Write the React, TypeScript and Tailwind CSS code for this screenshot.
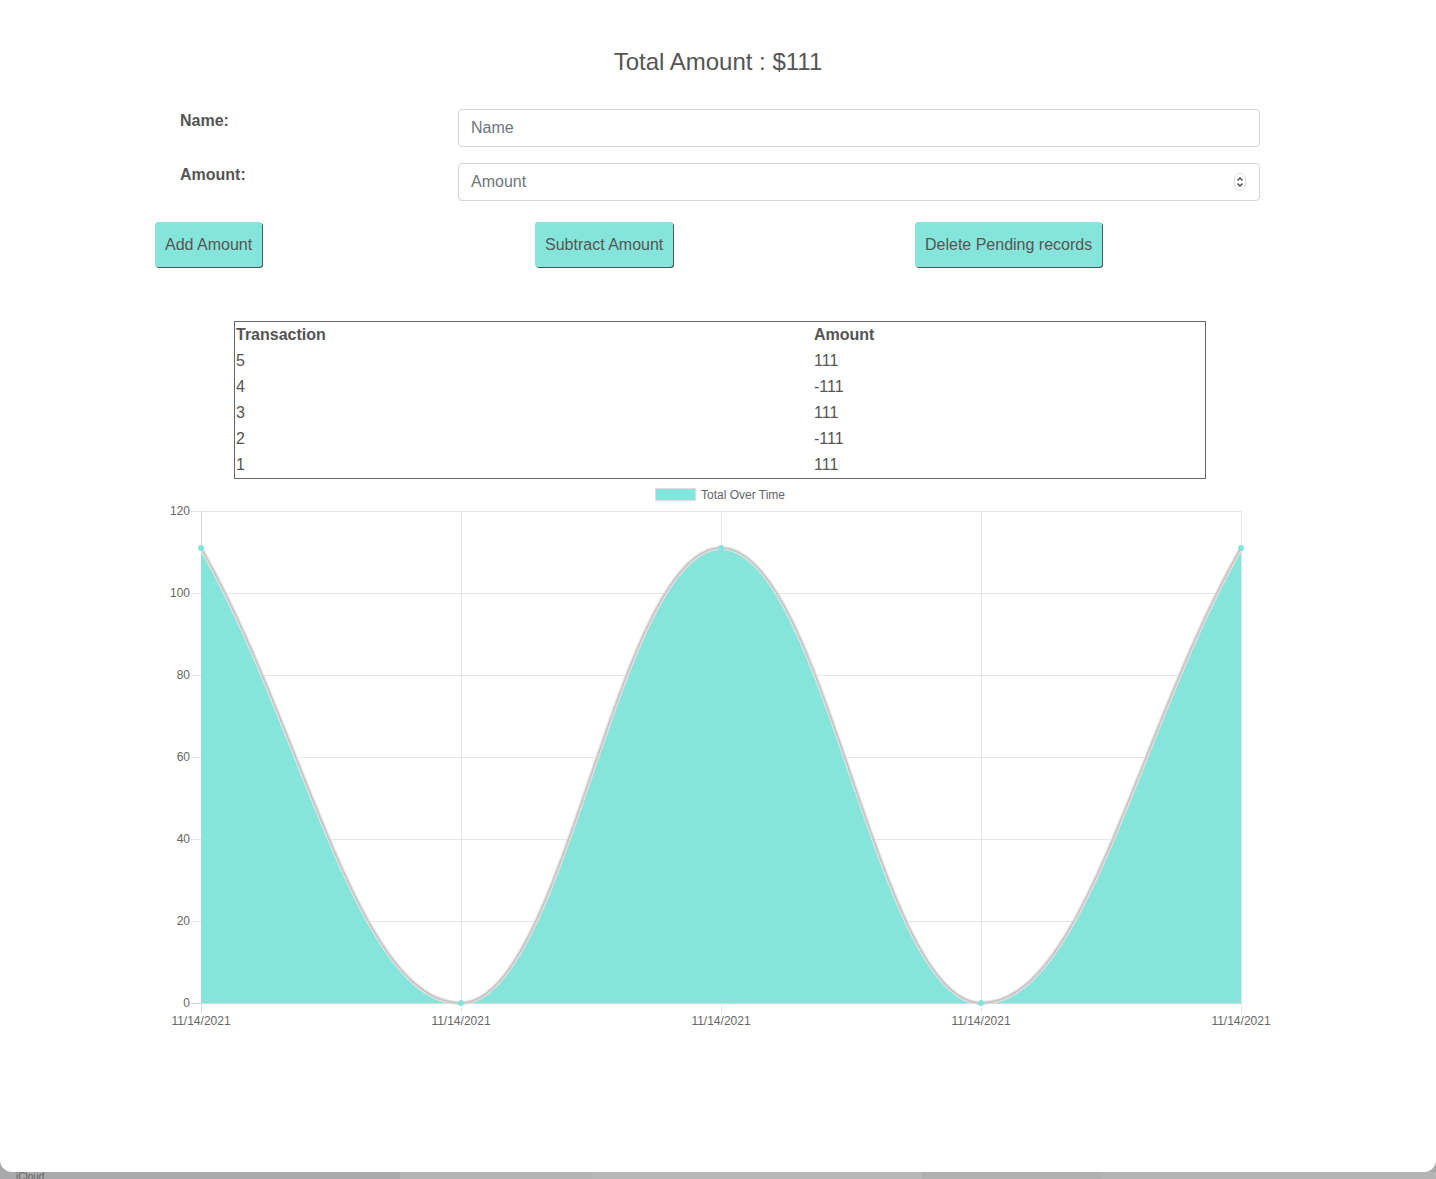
import React from 'react';

const TEAL = '#86e5da';

const transactions = [
  { id: 5, amount: '111' },
  { id: 4, amount: '-111' },
  { id: 3, amount: '111' },
  { id: 2, amount: '-111' },
  { id: 1, amount: '111' },
];

// plot area in page coordinates
const X0 = 201;
const X1 = 1241;
const Y_TOP = 511;
const Y_BOT = 1003;
const yFor = (v: number) => Y_BOT - (v / 120) * (Y_BOT - Y_TOP);
const xs = [201, 461, 721, 981, 1241];
const values = [111, 0, 111, 0, 111];

function Chart() {
  const ticks = [0, 20, 40, 60, 80, 100, 120];
  const pts = xs.map((x, i) => ({ x, y: yFor(values[i]) }));
  const top = yFor(111);
  const mid = top + 0.4 * (Y_BOT - top);
  const line =
    `M${pts[0].x},${pts[0].y} C305,${mid} 357,${Y_BOT} 461,${Y_BOT} ` +
    `C565,${Y_BOT} 617,${top} 721,${top} ` +
    `C825,${top} 877,${Y_BOT} 981,${Y_BOT} ` +
    `C1085,${Y_BOT} 1137,${mid} 1241,${top}`;
  const area = `${line} L${X1},${Y_BOT} L${X0},${Y_BOT} Z`;

  return (
    <svg width="1436" height="560" className="block" style={{ fontFamily: '"Liberation Sans", Arial, sans-serif' }}>
      <g transform="translate(0,-479)">
        {/* legend */}
        <rect x="655.5" y="488.5" width="40" height="12" fill={TEAL} stroke="#dddddd" />
        <text x="701" y="498.5" fontSize="12" fill="#666">Total Over Time</text>

        {/* grid */}
        {ticks.map((t) => (
          <g key={t}>
            <line x1="191" x2={X1} y1={yFor(t) + 0.5} y2={yFor(t) + 0.5} stroke={t === 0 ? '#d6d6d6' : '#e6e6e6'} />
            <text x="190" y={yFor(t) + 4} fontSize="12" fill="#666" textAnchor="end">{t}</text>
          </g>
        ))}
        {xs.map((x) => (
          <g key={x}>
            <line x1={x + 0.5} x2={x + 0.5} y1={Y_TOP} y2={Y_BOT + 10} stroke={x === X0 ? '#d6d6d6' : '#e6e6e6'} />
            <text x={x} y="1025" fontSize="12" fill="#666" textAnchor="middle">11/14/2021</text>
          </g>
        ))}

        {/* data */}
        <path d={area} fill={TEAL} />
        <path d={line} fill="none" stroke="#e2e2e2" strokeWidth="4" />
        <path d={line} fill="none" stroke="#c4c4c4" strokeWidth="1.5" />
        {pts.map((p) => (
          <circle key={p.x} cx={p.x} cy={p.y} r="3" fill={TEAL} />
        ))}
      </g>
    </svg>
  );
}

function Button({ children }: { children: React.ReactNode }) {
  return (
    <button className="h-[45px] px-[10px] bg-[#86e5da] text-[#555] text-[16px] rounded-[3px] shadow-[1px_1px_0_#555]">
      {children}
    </button>
  );
}

export default function App() {
  return (
    <div className="bg-[#a9a9ab] min-h-[1179px]" style={{ fontFamily: '"Liberation Sans", Arial, sans-serif' }}>
      <div className="bg-white h-[1172px] rounded-b-[12px] text-[#555]">
        <h1 className="pt-[48px] text-center text-[24px] leading-[28px]">Total Amount : $111</h1>

        <div className="mt-[33px] flex flex-col gap-[16px] pl-[180px]">
          <div className="flex items-start">
            <label className="w-[278px] font-bold text-[16px] leading-[24px]">Name:</label>
            <input
              placeholder="Name"
              className="w-[802px] h-[38px] px-[12px] border border-[#ced4da] rounded-[4px] text-[16px] placeholder:text-[#6c757d] outline-none"
            />
          </div>
          <div className="flex items-start">
            <label className="w-[278px] font-bold text-[16px] leading-[24px]">Amount:</label>
            <div className="relative">
              <input
                placeholder="Amount"
                className="w-[802px] h-[38px] px-[12px] border border-[#ced4da] rounded-[4px] text-[16px] placeholder:text-[#6c757d] outline-none"
              />
              <svg className="absolute right-[14px] top-[10px]" width="12" height="18" viewBox="0 0 12 18">
                <rect x="0.5" y="0.5" width="11" height="17" rx="5.5" fill="#fff" stroke="#ddd" />
                <path d="M3.5 7.5 L6 5 L8.5 7.5" fill="none" stroke="#444" strokeWidth="1.3" />
                <path d="M3.5 10.5 L6 13 L8.5 10.5" fill="none" stroke="#444" strokeWidth="1.3" />
              </svg>
            </div>
          </div>
        </div>

        <div className="mt-[21px] flex pl-[155px]">
          <div className="w-[380px]"><Button>Add Amount</Button></div>
          <div className="w-[380px]"><Button>Subtract Amount</Button></div>
          <div className="w-[380px]"><Button>Delete Pending records</Button></div>
        </div>

        <div className="mt-[54px] ml-[234px] w-[972px] border border-[#666] text-[16px] leading-[26px]">
          <div className="flex font-bold">
            <div className="w-[579px] pl-[1px]">Transaction</div>
            <div>Amount</div>
          </div>
          {transactions.map((t) => (
            <div key={t.id} className="flex">
              <div className="w-[579px] pl-[1px]">{t.id}</div>
              <div>{t.amount}</div>
            </div>
          ))}
        </div>

        <Chart />
      </div>
      <div className="flex h-[7px] text-[10px] leading-none text-[#666] overflow-hidden">
        <div className="w-[400px] pl-[16px]">iCloud</div>
        <div className="w-[192px] bg-[#b4b4b4]"></div>
        <div className="w-[330px] bg-[#b8b8b8]"></div>
        <div className="w-[180px] bg-[#b0b0b0]"></div>
        <div className="flex-1 bg-[#b4b4b4]"></div>
      </div>
    </div>
  );
}
